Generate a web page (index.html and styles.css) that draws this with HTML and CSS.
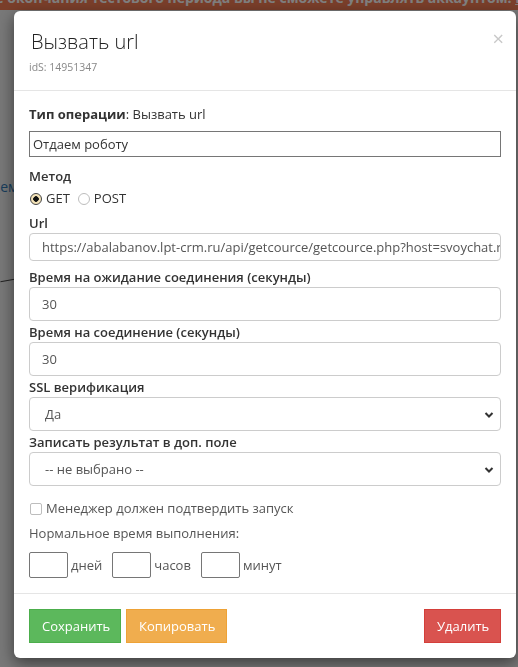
FILE: index.html
```html
<!DOCTYPE html>
<html lang="ru">
<head>
    <meta charset="UTF-8">
    <meta name="viewport" content="width=device-width, initial-scale=1.0">
    <title>Вызвать url</title>
    <link rel="stylesheet" href="styles.css">
</head>
<body>
    <div class="notice">После окончания тестового периода вы не сможете управлять аккаунтом. <a href="#">Перейти к оплате</a></div>
    <div class="page-body">
        <a class="page-link" href="#">Схема</a>
        <div class="page-line"></div>
    </div>

    <div class="backdrop"></div>

    <div class="modal">
        <div class="modal-header">
            <span class="close">&times;</span>
            <h4 class="modal-title">Вызвать url</h4>
            <div class="ids">idS: 14951347</div>
        </div>

        <div class="modal-body">
            <div class="op-type"><b>Тип операции</b>: Вызвать url</div>
            <input class="plain-input" type="text" value="Отдаем роботу">

            <div class="field-label">Метод</div>
            <div class="radio-row">
                <span class="radio checked"></span><span class="radio-text">GET</span>
                <span class="radio"></span><span class="radio-text">POST</span>
            </div>

            <div class="group group-url">
                <label class="field-label">Url</label>
                <div class="form-control short">https://abalabanov.lpt-crm.ru/api/getcource/getcource.php?host=svoychat.ru</div>
            </div>

            <div class="group">
                <label class="field-label">Время на ожидание соединения (секунды)</label>
                <div class="form-control">30</div>
            </div>

            <div class="group">
                <label class="field-label">Время на соединение (секунды)</label>
                <div class="form-control">30</div>
            </div>

            <div class="group">
                <label class="field-label">SSL верификация</label>
                <div class="form-control select">Да
                    <svg class="chevron" width="10" height="8" viewBox="0 0 10 8"><path d="M1.5 2 L5 5.5 L8.5 2" fill="none" stroke="#333" stroke-width="2"/></svg>
                </div>
            </div>

            <div class="group">
                <label class="field-label">Записать результат в доп. поле</label>
                <div class="form-control select">-- не выбрано --
                    <svg class="chevron" width="10" height="8" viewBox="0 0 10 8"><path d="M1.5 2 L5 5.5 L8.5 2" fill="none" stroke="#333" stroke-width="2"/></svg>
                </div>
            </div>

            <div class="check-row"><span class="checkbox"></span>Менеджер должен подтвердить запуск</div>

            <div class="normal-time">Нормальное время выполнения:</div>
            <div class="time-row">
                <span class="time-box"></span><span class="time-unit">дней</span>
                <span class="time-box"></span><span class="time-unit">часов</span>
                <span class="time-box"></span><span class="time-unit">минут</span>
            </div>
        </div>

        <div class="modal-footer">
            <button class="btn btn-success">Сохранить</button>
            <button class="btn btn-warning">Копировать</button>
            <button class="btn btn-danger">Удалить</button>
        </div>
    </div>
</body>
</html>
```

FILE: styles.css
```css
body {
    margin: 0;
    font-family: "Open Sans", Lato, Arial, sans-serif;
    font-size: 13px;
    color: #333;
    background: #f0f0f0;
    height: 667px;
    overflow: hidden;
}

.notice {
    background: #f47d55;
    color: #fff;
    font-weight: bold;
    font-size: 14px;
    height: 22px;
    line-height: 20px;
    margin-top: -12px;
    white-space: nowrap;
    overflow: hidden;
    text-indent: -40px;
}

.notice a {
    color: #fff;
}

.page-body {
    padding: 167px 0 0 0;
}

.page-link {
    color: #337ab7;
    font-size: 14px;
    text-decoration: none;
    margin-left: -16px;
}

.page-line {
    margin-top: 80px;
    height: 1px;
    width: 60px;
    background: #444;
    transform: rotate(-10deg);
}

.backdrop {
    position: fixed;
    top: 0;
    left: 0;
    right: 0;
    bottom: 0;
    background: rgba(0, 0, 0, 0.5);
}

.modal {
    position: fixed;
    top: 11px;
    left: 14px;
    width: 502px;
    background: #fff;
    border-radius: 6px;
    box-shadow: 0 5px 15px rgba(0, 0, 0, 0.5);
}

.modal-header {
    padding: 18px 15px 15px 17px;
    border-bottom: 1px solid #e5e5e5;
    height: 46px;
}

.close {
    float: right;
    color: #c8c8c8;
    font-size: 20px;
    line-height: 14px;
    margin-top: 3px;
    margin-right: -3px;
}

.modal-title {
    margin: 0;
    font-size: 20px;
    font-weight: 300;
    line-height: 26px;
    color: #222;
}

.ids {
    font-size: 10.5px;
    color: #888;
    margin-top: 5px;
    margin-left: -2px;
}

.modal-body {
    padding: 15px 15px 0 15px;
}

.op-type {
    line-height: 17px;
    margin-bottom: 8px;
}

.plain-input {
    display: block;
    box-sizing: border-box;
    width: 100%;
    height: 26px;
    margin: 0 0 11px 0;
    padding: 0 3px;
    border: 1px solid #767676;
    font-family: inherit;
    font-size: 13px;
    color: #333;
}

.field-label {
    display: block;
    font-weight: 600;
    line-height: 17px;
}

.radio-row {
    display: flex;
    align-items: center;
    line-height: 17px;
    margin: 5px 0 8px 0;
}

.radio {
    box-sizing: border-box;
    width: 12px;
    height: 12px;
    border-radius: 50%;
    border: 1px solid #bdbdbd;
    margin: 0 4px 0 1px;
}

.radio.checked {
    border: 1px solid #444;
    background: radial-gradient(circle, #111 0 2.5px, #f4e3b8 3px);
}

.radio-text {
    margin-right: 7px;
}

.group {
    margin-bottom: 3px;
}

.group-url {
    margin-bottom: 8px;
}

.group .field-label {
    margin-bottom: 1px;
}

.form-control {
    box-sizing: border-box;
    height: 34px;
    line-height: 32px;
    border: 1px solid #ccc;
    border-radius: 4px;
    padding: 0 12px;
    color: #555;
    white-space: nowrap;
    overflow: hidden;
    position: relative;
}

.form-control.short {
    height: 28px;
    line-height: 26px;
}

.form-control.select {
    padding-left: 15px;
}

.chevron {
    position: absolute;
    right: 6px;
    top: 13px;
}

.check-row {
    display: flex;
    align-items: center;
    margin-top: 14px;
    line-height: 17px;
    color: #555;
}

.checkbox {
    box-sizing: border-box;
    width: 12px;
    height: 12px;
    border: 1px solid #bdbdbd;
    border-radius: 2px;
    margin: 0 4px 0 1px;
}

.normal-time {
    margin-top: 8px;
    line-height: 17px;
    color: #555;
}

.time-row {
    display: flex;
    align-items: center;
    margin-top: 10px;
    color: #555;
}

.time-box {
    box-sizing: border-box;
    width: 39px;
    height: 26px;
    border: 1px solid #767676;
    border-radius: 2px;
}

.time-unit {
    margin: 0 10px 0 3px;
}

.modal-footer {
    margin-top: 15px;
    padding: 15px;
    border-top: 1px solid #e5e5e5;
    display: flex;
    gap: 5px;
}

.btn {
    height: 34px;
    padding: 0 12px;
    font-family: inherit;
    font-size: 13px;
    color: #fff;
    border: 1px solid transparent;
    border-radius: 0;
}

.btn-success {
    background: #5cb85c;
    border-color: #4cae4c;
    width: 92px;
}

.btn-warning {
    background: #f0ad4e;
    border-color: #eea236;
    width: 101px;
}

.btn-danger {
    background: #d9534f;
    border-color: #d43f3a;
    width: 77px;
    margin-left: auto;
}
```
